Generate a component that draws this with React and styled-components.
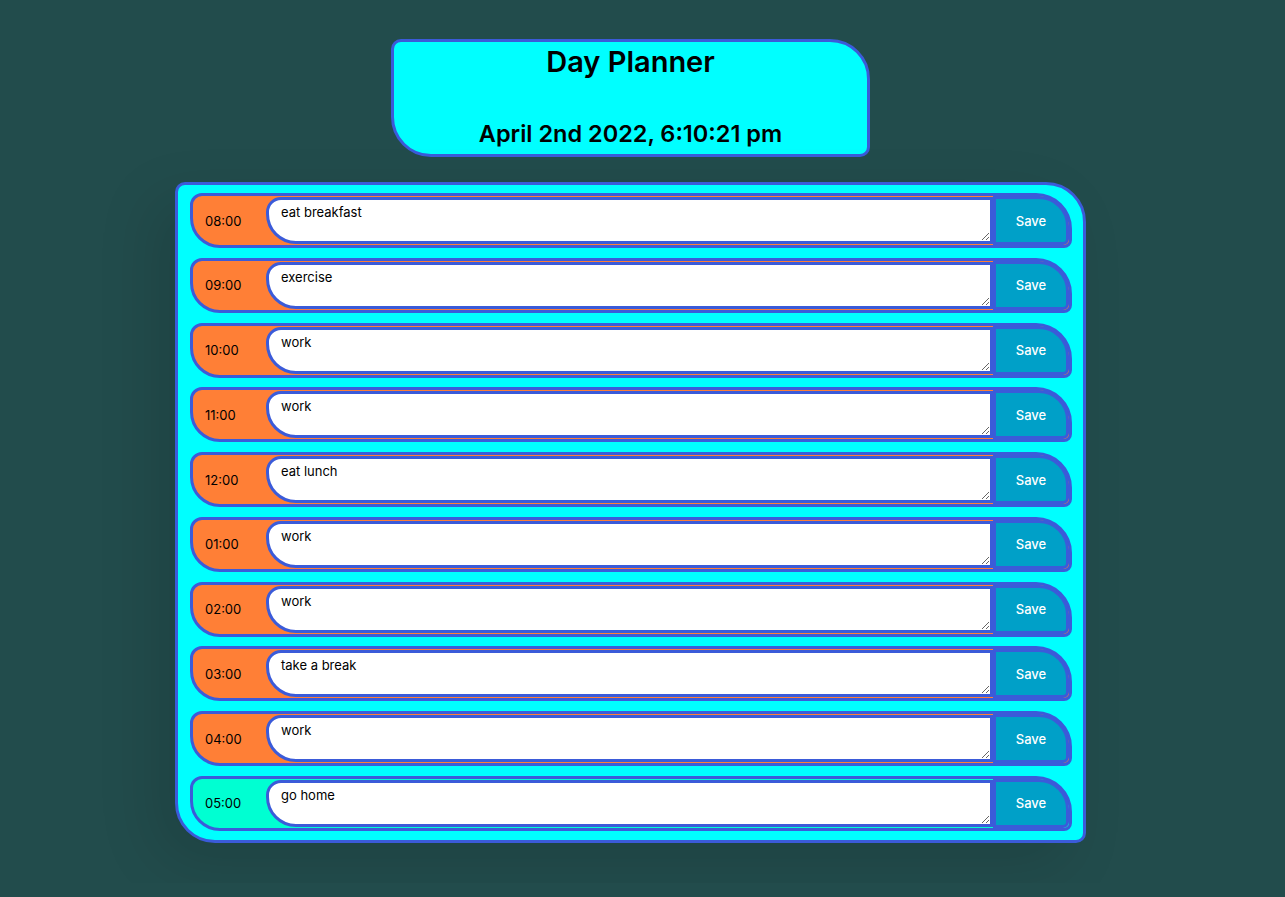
import React from "react";
import styled, { createGlobalStyle } from "styled-components";

const Global = createGlobalStyle`
  html, body { margin: 0; padding: 0; background: #224c4c; }
  body { font-family: Inter, "Noto Sans", "Liberation Sans", sans-serif; }
`;

const Page = styled.div`
  width: 1261px;
  display: flex;
  flex-direction: column;
  align-items: center;
  padding-top: 39px;
  padding-bottom: 40px;
`;

const Header = styled.header`
  box-sizing: border-box;
  width: 479px;
  height: 118px;
  background: #00ffff;
  border: 3px solid #3b5bd9;
  border-radius: 10px 40px 10px 40px;
  display: flex;
  flex-direction: column;
  justify-content: space-between;
  align-items: center;
  padding: 2px 0 6px;
`;

const Title = styled.h1`
  margin: 0;
  font-size: 29px;
  line-height: 36px;
  font-weight: 600;
  color: #000;
`;

const DateLine = styled.p`
  margin: 0;
  font-size: 23.5px;
  line-height: 29px;
  font-weight: 600;
  color: #000;
`;

const Planner = styled.main`
  box-sizing: border-box;
  width: 911px;
  margin-top: 25px;
  background: #00ffff;
  border: 3px solid #3b5bd9;
  border-radius: 10px 40px 10px 40px;
  padding: 8px 11px 9px 12px;
  display: flex;
  flex-direction: column;
  gap: 9.78px;
  box-shadow: -20px 20px 60px rgba(0, 0, 0, 0.12);
`;

const Row = styled.div`
  box-sizing: border-box;
  height: 55px;
  display: flex;
  align-items: center;
  background: ${(p) => (p.$state === "future" ? "#00ffd2" : "#ff7f36")};
  border: 3px solid #3b5bd9;
  border-radius: 12px 36px 8px 30px;
`;

const Hour = styled.div`
  box-sizing: border-box;
  width: 73px;
  align-self: stretch;
  display: flex;
  align-items: center;
  padding-left: 12px;
  font-size: 13px;
  color: #000;
`;

const Task = styled.textarea`
  box-sizing: border-box;
  width: 727px;
  height: 47px;
  margin: 0;
  border: 3px solid #3b5bd9;
  border-radius: 15px 0 0 30px;
  background: #fff;
  padding: 4px 12px;
  font-family: Inter, "Noto Sans", "Liberation Sans", sans-serif;
  font-size: 13px;
  line-height: 16px;
  color: #000;
  outline: none;
`;

const SaveBtn = styled.button`
  box-sizing: border-box;
  width: 76px;
  align-self: stretch;
  margin: 0;
  background: #00a0c8;
  border: 3px solid #3b5bd9;
  border-radius: 0 30px 6px 0;
  color: #fff;
  font-family: Inter, "Noto Sans", "Liberation Sans", sans-serif;
  font-size: 13px;
  font-weight: 500;
  cursor: pointer;
`;

const rows = [
  ["08:00", "eat breakfast", "past"],
  ["09:00", "exercise", "past"],
  ["10:00", "work", "past"],
  ["11:00", "work", "past"],
  ["12:00", "eat lunch", "past"],
  ["01:00", "work", "past"],
  ["02:00", "work", "past"],
  ["03:00", "take a break", "past"],
  ["04:00", "work", "past"],
  ["05:00", "go home", "future"],
];

export default function App() {
  return (
    <>
      <Global />
      <Page>
        <Header>
          <Title>Day Planner</Title>
          <DateLine>April 2nd 2022, 6:10:21 pm</DateLine>
        </Header>
        <Planner>
          {rows.map(([h, t, s]) => (
            <Row key={h} $state={s}>
              <Hour>{h}</Hour>
              <Task defaultValue={t} />
              <SaveBtn>Save</SaveBtn>
            </Row>
          ))}
        </Planner>
      </Page>
    </>
  );
}
